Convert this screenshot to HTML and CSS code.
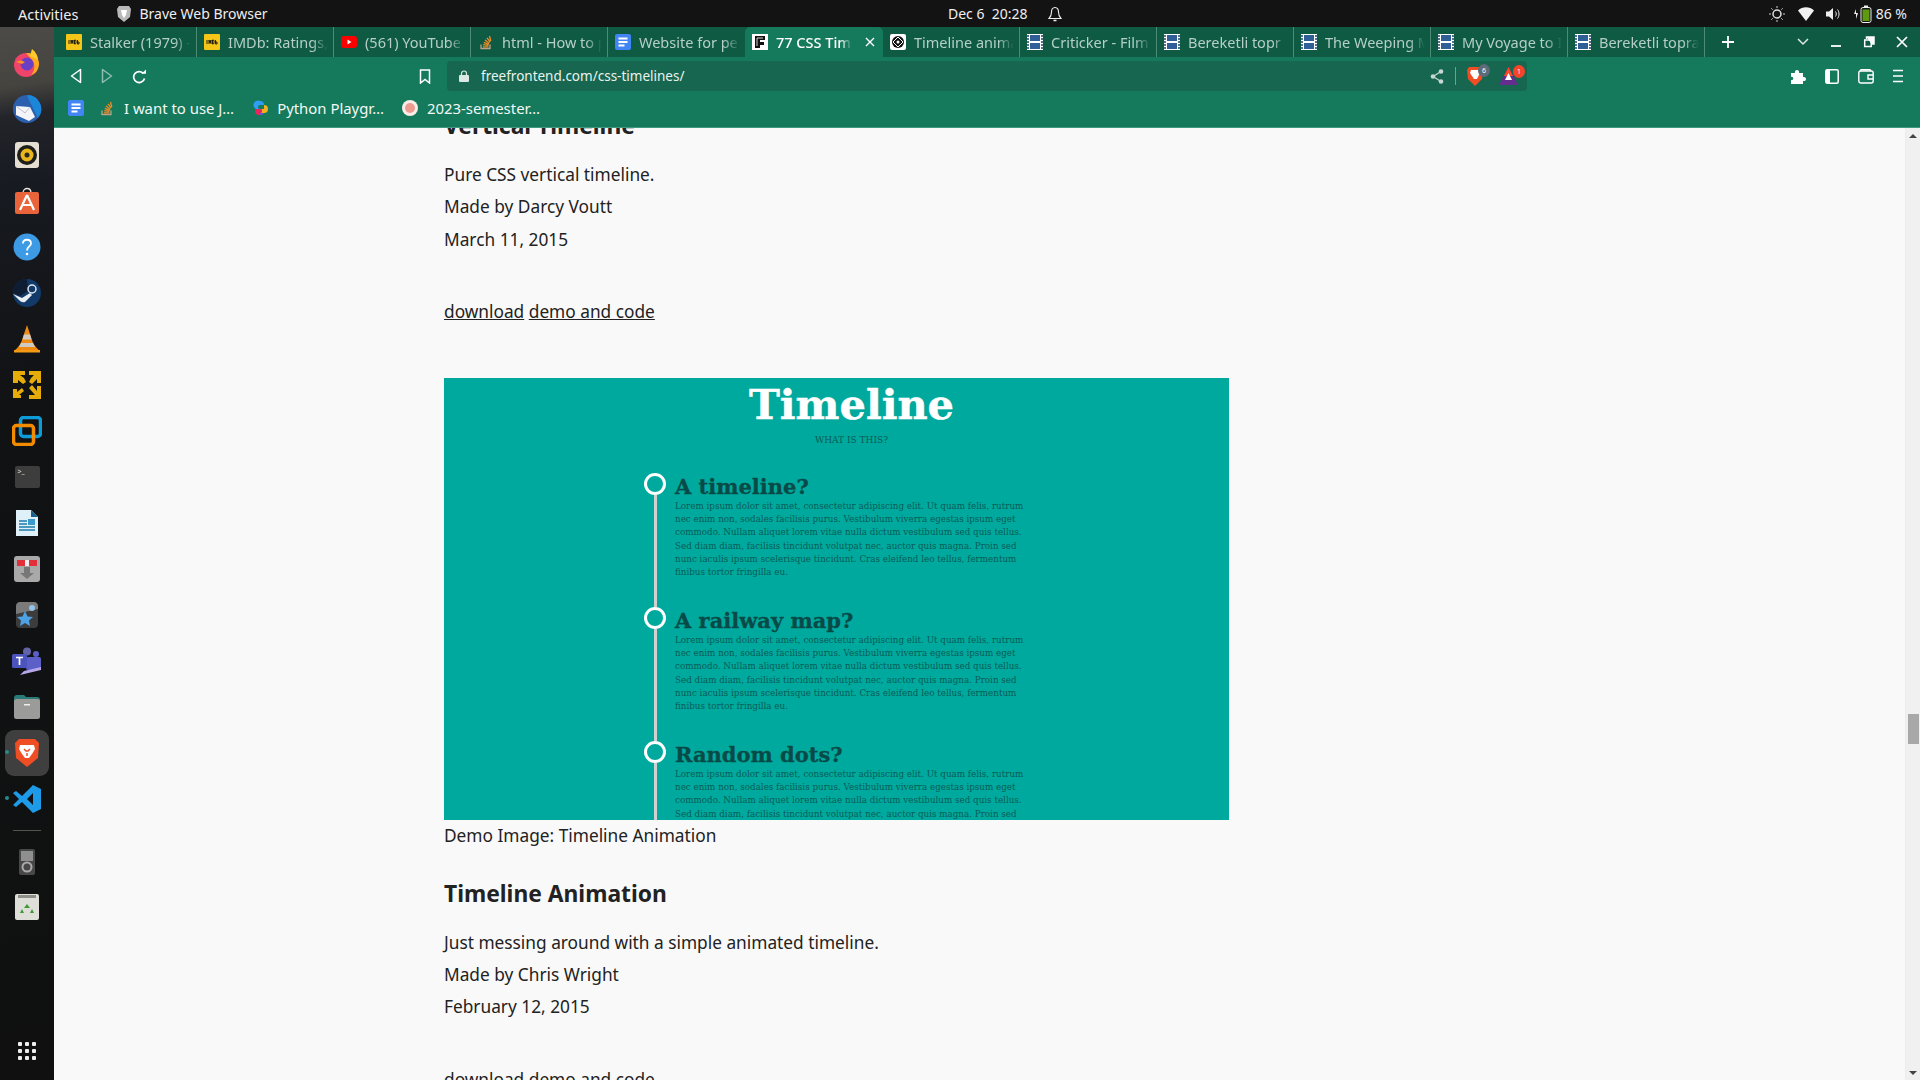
FILE: index.html
```html
<!DOCTYPE html>
<html>
<head>
  <title>77 CSS Timelines</title>
  <link rel="stylesheet" href="styles.css">
</head>
<body>
  <svg class="defs" width="0" height="0">
    <symbol id="fav-doc" viewBox="0 0 16 16"><rect width="16" height="16" rx="2" fill="#4285f4"/><path d="M3.500 4.500h9M3.500 8h9M3.500 11.500h6" stroke="#fff" stroke-width="1.800"/></symbol>
    <symbol id="fav-film" viewBox="0 0 16 16"><rect width="16" height="16" fill="#fff"/><rect x="3" y="1" width="10" height="6" fill="#2f5f96"/><rect x="3" y="9" width="10" height="6" fill="#2f5f96"/><path d="M1 1v14M15 1v14" stroke="#54708f" stroke-width="2" stroke-dasharray="2 1"/></symbol>
    <symbol id="fav-imdb" viewBox="0 0 16 16"><rect width="16" height="16" rx="1" fill="#f5c518"/><path d="M3 6v4M5 10V6l1 3 1-3v4M8.500 6v4h1l.5-1V7l-.5-1zM11.500 6v4h1.500V8h-1.500" stroke="#111" stroke-width=".9" fill="none"/></symbol>
    <symbol id="fav-so" viewBox="0 0 16 16"><path d="M3 10.500v4h9v-4" stroke="#b8a28a" stroke-width="1.300" fill="none"/><path d="M5 12.800h5.500M5.200 10.600l5.300.8M5.800 8.300l5 2M7 6l4.300 3.200M9 3.800l3.200 4.200M11.500 2l1.300 5" stroke="#f08a24" stroke-width="1.300"/></symbol>
  </svg>

  <header class="topbar">
    <div class="topbar-left">
      <span class="activities">Activities</span>
      <svg class="app-shield" width="16" height="18" viewBox="0 0 16 18"><path d="M3 1h10l2 3-1 8-6 5-6-5-1-8z" fill="#b9b9b9"/><path d="M5 5h6l-1 5-2 3-2-3z" fill="#fff"/></svg>
      <span>Brave Web Browser</span>
    </div>
    <div class="topbar-clock">
      <span>Dec 6&nbsp; 20:28</span>
      <svg width="14" height="16" viewBox="0 0 14 16"><path d="M7 1.500c-2.500 0-3.500 2-3.500 4.500 0 3-1 5-2.500 6.500h12C11.500 11 10.500 9 10.500 6c0-2.500-1-4.500-3.500-4.500z" fill="none" stroke="#eee" stroke-width="1.100"/><path d="M5.500 14.500h3" stroke="#eee" stroke-width="1.500"/></svg>
    </div>
    <div class="topbar-right">
      <svg width="18" height="18" viewBox="0 0 18 18"><circle cx="9" cy="9" r="4" fill="none" stroke="#ddd" stroke-width="1.500"/><path d="M9 1v2M9 15v2M1 9h2M15 9h2M3.300 3.300l1.400 1.400M13.300 13.300l1.400 1.400M3.300 14.700l1.400-1.400M13.300 4.700l1.400-1.400" stroke="#ccc"/></svg>
      <svg width="16" height="14" viewBox="0 0 16 14"><path d="M0 3.500C4.500-.8 11.500-.8 16 3.500L8 14z" fill="#f2f2f2"/></svg>
      <svg width="15" height="14" viewBox="0 0 15 14"><path d="M0 4.500h3L7 1v12L3 9.500H0z" fill="#eee"/><path d="M9.500 4.500c1 1.500 1 3.500 0 5M11.500 2.500c2 2.500 2 6.500 0 9" stroke="#eee" fill="none"/></svg>
      <span class="battery">
        <svg width="20" height="18" viewBox="0 0 20 18"><path d="M3 4 1 9h2v5l2-6H3z" fill="#eee"/><rect x="8" y="2.500" width="10" height="15" rx="2" fill="none" stroke="#eee"/><rect x="11" y=".5" width="4" height="2" fill="#eee"/><rect x="9.500" y="4.500" width="7" height="11.500" fill="#5d9a10"/></svg>
        86 %
      </span>
    </div>
  </header>

  <div class="desktop">
    <nav class="dock">
      <div class="dock-item"><svg width="30" height="30" viewBox="0 0 30 30"><circle cx="14" cy="17" r="12" fill="#f0446a"/><path d="M14 5c8-1 14 6 13 12-1 6-4 9-8 10 4-4 5-12 0-16z" fill="#ffa81f"/><path d="M20 1c4 3 6 7 6 11l-8-4z" fill="#ffcb2c"/><circle cx="15" cy="16" r="6.500" fill="#6a3fc4"/><path d="M4 14c3-2 6-2 9 0l-3 2z" fill="#ff9220"/></svg></div>
      <div class="dock-item"><svg width="30" height="30" viewBox="0 0 30 30"><circle cx="15" cy="15" r="14" fill="#2c5fae"/><path d="M15 1a14 14 0 0 1 11 23L17 6z" fill="#1c86d8"/><path d="M4 12l14 1 5 10-6 4-13-6z" fill="#f5f5f8"/><path d="M4 12l9 7 5-6" stroke="#bcc2d4" fill="none"/></svg></div>
      <div class="dock-item"><svg width="26" height="30" viewBox="0 0 26 30"><rect x="1" y="2" width="24" height="26" rx="3" fill="#e4dfd2"/><circle cx="13" cy="15" r="10" fill="#1d1d1b"/><circle cx="13" cy="15" r="6.500" fill="#e9b71b"/><circle cx="13" cy="15" r="2.500" fill="#2a2a24"/></svg></div>
      <div class="dock-item"><svg width="28" height="30" viewBox="0 0 28 30"><path d="M10 7c0-6 8-6 8 0" fill="none" stroke="#eee3da" stroke-width="1.300"/><rect x="2" y="6" width="24" height="22" rx="2" fill="#e9643a"/><path d="M14 9l7 15M14 9 7 24M9.500 19h9" stroke="#fff" stroke-width="2.200" fill="none"/></svg></div>
      <div class="dock-item"><svg width="28" height="28" viewBox="0 0 28 28"><circle cx="14" cy="14" r="13.500" fill="#3c9be4"/><path d="M10 10.500c0-5 8-5 8 0 0 3-4 3-4 7" stroke="#fff" stroke-width="1.800" fill="none"/><circle cx="14" cy="21" r="1.300" fill="#fff"/></svg></div>
      <div class="dock-item"><svg width="28" height="28" viewBox="0 0 28 28"><circle cx="14" cy="14" r="14" fill="#123a68"/><path d="M14 0a14 14 0 0 0-14 14l7 3 8-5z" fill="#0e1d33"/><circle cx="19" cy="10" r="4" fill="none" stroke="#dfe6ee" stroke-width="1.500"/><path d="M0 15l9 4 8-5 2 2-7 7c-3 1-5-1-6-2z" fill="#e9eef3"/></svg></div>
      <div class="dock-item"><svg width="26" height="30" viewBox="0 0 26 30"><path d="M13 1l5 15c1 3 3 7 8 11H0c5-4 7-8 8-11z" fill="#ef8a12"/><path d="M10 10.500h6l1.500 5H8.500zM7 19h12l2 4H5z" fill="#cfcac4"/><rect y="26" width="26" height="2.500" fill="#f59a14"/></svg></div>
      <div class="dock-item"><svg width="30" height="30" viewBox="0 0 30 30"><path d="M1 1h12v4H8l4 3 2 4-3 2-5-4v3H1zM29 1H17v4h5l-3 3-2 4 3 2 5-5v4h4zM1 26l0-7h4v3l5-4 2 3-5 4h2v3H1zM29 29H17v-4h6l-6-7 3-3 5 6v-5h4z" fill="#e6ac0a"/></svg></div>
      <div class="dock-item"><svg width="30" height="30" viewBox="0 0 30 30"><rect x="8.500" y="1.500" width="20" height="19" rx="3" fill="none" stroke="#0d9cd8" stroke-width="3.500"/><rect x="1.500" y="9.500" width="20" height="19" rx="3" fill="none" stroke="#f28b00" stroke-width="3.500"/></svg></div>
      <div class="dock-item"><div class="dock-term">&gt;_</div></div>
      <div class="dock-item"><svg width="24" height="28" viewBox="0 0 24 28"><path d="M1 1h15l7 7v19H1z" fill="#dff0f8"/><path d="M16 1l7 7h-7z" fill="#18618c"/><path d="M4 12h8M4 15h8M4 18h16M4 21h16" stroke="#1d7bab" stroke-width="1.500"/><rect x="13" y="10" width="7" height="6" fill="#3b9acb"/></svg></div>
      <div class="dock-item"><svg width="26" height="26" viewBox="0 0 26 26"><rect width="26" height="26" rx="3" fill="#a9a9a9"/><rect x="3" y="4" width="20" height="6" fill="#e2303a"/><rect x="11" y="4" width="4" height="6" fill="#eee"/><path d="M10 11h6v6h4l-7 6-7-6h4z" fill="#777"/></svg></div>
      <div class="dock-item"><svg width="22" height="26" viewBox="0 0 22 26"><rect width="22" height="26" rx="4" fill="#3c3c3c"/><path d="M0 4c0-2 2-4 4-4h14c2 0 4 2 4 4v3L0 12z" fill="#7a7a7a"/><path d="M9 9l2.500 5.500 5.500.5-4 3.500 1 5.500-5-3-5 3 1-5.500-4-3.500 5.500-.5z" fill="#4da2e6"/><circle cx="16" cy="6" r="3" fill="#93c3e8"/></svg></div>
      <div class="dock-item"><svg width="30" height="28" viewBox="0 0 30 28"><circle cx="15" cy="4.500" r="4" fill="#6264a7"/><circle cx="24" cy="7" r="3" fill="#5b5fc7"/><rect x="14" y="10" width="15" height="13" rx="2" fill="#5b5fc7"/><rect y="7" width="15" height="14" rx="1.500" fill="#4b53bc"/><path d="M4 10.500h7M7.500 10.500V18" stroke="#fff" stroke-width="1.700"/><path d="M8 28l21-5v-3L12 24z" fill="#b7a6ea"/></svg></div>
      <div class="dock-item"><svg width="28" height="24" viewBox="0 0 28 24"><path d="M1 3c0-2 1-3 3-3h7l2 2h11c2 0 3 1 3 3v4H1z" fill="#2a7a78"/><rect x="1" y="4" width="26" height="20" rx="2.500" fill="#9b9b99"/><rect x="11" y="9" width="6" height="1.500" fill="#eee"/></svg></div>
      <div class="dock-item is-active"><span class="dock-dot"></span><svg width="26" height="30" viewBox="0 0 26 30"><path d="M5 1h16l4 4-1 15-11 9L2 20 1 5z" fill="#ef4d23"/><path d="M6 7h14l1 4-3 5-3 4h-4l-3-4-3-5z" fill="#fff"/><path d="M10 11l2 2h2l2-2M13 15v3" stroke="#ef4d23" stroke-width="1.500" fill="none"/></svg></div>
      <div class="dock-item"><span class="dock-dot"></span><svg width="28" height="28" viewBox="0 0 28 28"><path d="M20 0l8 4v20l-8 4-11-11-6 5-3-2 6-6-6-6 3-2 6 5zm0 8-6 6 6 6z" fill="#1e9be8"/></svg></div>
      <div class="dock-rule"></div>
      <div class="dock-item is-low"><svg width="16" height="26" viewBox="0 0 16 26"><rect width="16" height="26" rx="2" fill="#474747"/><rect x="2" y="2" width="12" height="10" fill="#8f8f8f"/><circle cx="8" cy="18" r="4.500" fill="none" stroke="#aaa" stroke-width="2"/></svg></div>
      <div class="dock-item is-low"><svg width="24" height="26" viewBox="0 0 24 26"><rect width="24" height="26" rx="2" fill="#dedfd8"/><rect x="3" y="1" width="18" height="3" fill="#8f8f88"/><path d="M12 10l3 4h-6zM7 15l2 4H5zM17 15l2 4h-4z" fill="#3f9a35"/></svg></div>
      <div class="dock-apps">
        <i></i><i></i><i></i><i></i><i></i><i></i><i></i><i></i><i></i>
      </div>
    </nav>

    <div class="browser">
      <div class="tabstrip">
        <div class="tab is-first"><svg class="fav"><use href="#fav-imdb"/></svg><span class="tab-title">Stalker (1979) -</span></div>
        <div class="tab"><svg class="fav"><use href="#fav-imdb"/></svg><span class="tab-title">IMDb: Ratings,</span></div>
        <div class="tab"><svg class="fav" viewBox="0 0 16 16"><rect y="2" width="16" height="12" rx="3" fill="#f00"/><path d="M6.500 5.500v5l4-2.500z" fill="#fff"/></svg><span class="tab-title">(561) YouTube</span></div>
        <div class="tab"><svg class="fav"><use href="#fav-so"/></svg><span class="tab-title">html - How to p</span></div>
        <div class="tab is-before-active"><svg class="fav"><use href="#fav-doc"/></svg><span class="tab-title">Website for pe</span></div>
        <div class="tab is-active"><svg class="fav" viewBox="0 0 16 16"><rect width="16" height="16" fill="#fff"/><path d="M3 2h10v4H8v2h4v3H8v3H3z" fill="#111"/><path d="M5 4h6M5 4v8" stroke="#fff" stroke-width=".8"/></svg><span class="tab-title">77 CSS Time</span><svg class="tab-close" width="10" height="10" viewBox="0 0 10 10"><path d="M1 1l8 8M9 1 1 9" stroke="#fff" stroke-width="1.400"/></svg></div>
        <div class="tab"><svg class="fav" viewBox="0 0 16 16"><rect width="16" height="16" rx="2" fill="#fff"/><circle cx="8" cy="8" r="6" fill="#111"/><path d="M8 3l5 5-5 5-5-5z" fill="none" stroke="#fff"/><circle cx="8" cy="8" r="1.500" fill="#fff"/></svg><span class="tab-title">Timeline anima</span></div>
        <div class="tab"><svg class="fav"><use href="#fav-film"/></svg><span class="tab-title">Criticker - Film</span></div>
        <div class="tab"><svg class="fav"><use href="#fav-film"/></svg><span class="tab-title">Bereketli topr</span></div>
        <div class="tab"><svg class="fav"><use href="#fav-film"/></svg><span class="tab-title">The Weeping M</span></div>
        <div class="tab"><svg class="fav"><use href="#fav-film"/></svg><span class="tab-title">My Voyage to It</span></div>
        <div class="tab"><svg class="fav"><use href="#fav-film"/></svg><span class="tab-title">Bereketli topra</span></div>
        <svg class="new-tab" width="14" height="14" viewBox="0 0 14 14"><path d="M7 1v12M1 7h12" stroke="#fff" stroke-width="1.800"/></svg>
        <div class="win-controls">
          <svg width="12" height="8" viewBox="0 0 12 8"><path d="M1 1l5 5 5-5" stroke="#dfeae6" stroke-width="1.500" fill="none"/></svg>
          <svg width="12" height="12" viewBox="0 0 12 12"><path d="M1 10h10" stroke="#fff" stroke-width="1.800"/></svg>
          <svg width="12" height="12" viewBox="0 0 12 12"><path d="M3.500 1h7.500v7H8.500" fill="#fff"/><path d="M3.500 3V1h7.500v7H9" fill="none" stroke="#fff" stroke-width="1.500"/><rect x="1.700" y="4" width="6.500" height="6.500" fill="none" stroke="#fff" stroke-width="1.500"/></svg>
          <svg width="12" height="12" viewBox="0 0 12 12"><path d="M1 1l10 10M11 1 1 11" stroke="#fff" stroke-width="1.700"/></svg>
        </div>
      </div>

      <div class="toolbar">
        <div class="nav-btns">
          <svg width="12" height="16" viewBox="0 0 12 16"><path d="M10.500 1.500v13L1.500 8z" fill="none" stroke="#fff" stroke-width="1.500" stroke-linejoin="round"/></svg>
          <svg class="is-off" width="12" height="16" viewBox="0 0 12 16"><path d="M1.500 1.500v13l9-6.500z" fill="none" stroke="#8fbcae" stroke-width="1.500" stroke-linejoin="round"/></svg>
          <svg width="15" height="15" viewBox="0 0 15 15"><path d="M12.500 9.500a5.500 5.500 0 1 1-1.300-5.200" fill="none" stroke="#fff" stroke-width="1.700"/><path d="M9.500 4.800h4.500V.5z" fill="#fff"/></svg>
          <svg class="nav-bookmark" width="12" height="15" viewBox="0 0 12 15"><path d="M1.500 1h9v13L6 10.500 1.500 14z" fill="none" stroke="#fff" stroke-width="1.500"/></svg>
        </div>
        <div class="urlbar">
          <svg width="10" height="12" viewBox="0 0 10 12"><rect y="5" width="10" height="7" rx="1" fill="#dce8e4"/><path d="M2.500 5V3.500a2.500 2.500 0 0 1 5 0V5" fill="none" stroke="#dce8e4" stroke-width="1.200"/></svg>
          <span class="url-text">freefrontend.com/css-timelines/</span>
          <svg class="url-share" width="14" height="15" viewBox="0 0 14 15"><path d="M11 2.500 3 7.500l8 5" fill="none" stroke="#c7d8d2" stroke-width="1.200"/><circle cx="11" cy="2.500" r="2.300" fill="#c7d8d2"/><circle cx="3" cy="7.500" r="2.300" fill="#c7d8d2"/><circle cx="11" cy="12.500" r="2.300" fill="#c7d8d2"/></svg>
          <span class="url-divider"></span>
          <span class="shield">
            <svg width="16" height="20" viewBox="0 0 16 20"><path d="M2 1h12l2 3-1 9-7 7-7-7-1-9z" fill="#ef4d23"/><path d="M4 4h8l1 3-3 6H7L3 7z" fill="#fff"/></svg>
            <span class="badge badge-grey">6</span>
          </span>
          <span class="shield bat">
            <svg width="19" height="18" viewBox="0 0 19 18"><path d="M9.500 0 19 18H0z" fill="#662d91"/><path d="M9.500 0 14 9H5z" fill="#ff4724"/><path d="M9.500 6l3.500 7H6z" fill="#fff"/></svg>
            <span class="badge badge-red">1</span>
          </span>
        </div>
        <div class="tool-btns">
          <svg width="15" height="15" viewBox="0 0 15 15"><path d="M0 4h4c-1-4 5-4 4 0h4v4c4-1 4 5 0 4v3H0v-4c3 1 3-4 0-3z" fill="#fff"/></svg>
          <svg width="14" height="15" viewBox="0 0 14 15"><rect x=".8" y=".8" width="12.400" height="13.400" rx="1.500" fill="none" stroke="#fff" stroke-width="1.500"/><rect x="1" y="1" width="4" height="13" fill="#fff"/></svg>
          <svg width="16" height="15" viewBox="0 0 16 15"><rect x=".8" y="2" width="14.400" height="12" rx="2" fill="none" stroke="#fff" stroke-width="1.400"/><path d="M2 2 3 .8h9l1 1.200M15 6h-5v4h5" fill="none" stroke="#fff" stroke-width="1.400"/></svg>
          <svg width="10" height="14" viewBox="0 0 10 14"><path d="M0 1.500h10M0 7h10M0 12.500h10" stroke="#fff" stroke-width="1.500"/></svg>
        </div>
      </div>

      <div class="bookmarks">
        <svg class="fav bm-doc"><use href="#fav-doc"/></svg>
        <div class="bm bm-first"><svg class="fav"><use href="#fav-so"/></svg><span>I want to use J…</span></div>
        <div class="bm"><svg class="fav" viewBox="0 0 16 16"><path d="M8 1a4 4 0 0 1 4 4H8a2 2 0 0 0 0 4H4a4 4 0 0 1 4-8z" fill="#2f9df4"/><path d="M12 5a4 4 0 0 1 0 8H8a2 2 0 0 0 0-4h4z" fill="#f2b01e"/><path d="M8 9a2 2 0 0 1 0 4v2a4 4 0 0 1-5-4c0-1 .5-2 1-2z" fill="#e8265e"/><path d="M8 13h4a4 4 0 0 1-4 2z" fill="#7c4dd0"/></svg><span>Python Playgr…</span></div>
        <div class="bm"><svg class="fav" viewBox="0 0 16 16"><circle cx="8" cy="8" r="8" fill="#fbeee9"/><circle cx="8" cy="8" r="5" fill="#ee9b92"/></svg><span>2023-semester…</span></div>
      </div>

      <div class="viewport">
        <main class="page">
          <article class="entry entry-first">
            <h2>Vertical Timeline</h2>
            <p>Pure CSS vertical timeline.</p>
            <p>Made by Darcy Voutt</p>
            <p>March 11, 2015</p>
            <p class="links"><a href="#">download</a> <a href="#">demo and code</a></p>
          </article>

          <figure class="demo">
            <div class="demo-image">
              <h1 class="demo-title">Timeline</h1>
              <div class="demo-sub">WHAT IS THIS?</div>
              <div class="demo-item">
                <div class="demo-rail"><span class="demo-dot"></span><span class="demo-line"></span></div>
                <div class="demo-copy">
                  <h3>A timeline?</h3>
                  <p>Lorem ipsum dolor sit amet, consectetur adipiscing elit. Ut quam felis, rutrum<br>nec enim non, sodales facilisis purus. Vestibulum viverra egestas ipsum eget<br>commodo. Nullam aliquet lorem vitae nulla dictum vestibulum sed quis tellus.<br>Sed diam diam, facilisis tincidunt volutpat nec, auctor quis magna. Proin sed<br>nunc iaculis ipsum scelerisque tincidunt. Cras eleifend leo tellus, fermentum<br>finibus tortor fringilla eu.</p>
                </div>
              </div>
              <div class="demo-item">
                <div class="demo-rail"><span class="demo-dot"></span><span class="demo-line"></span></div>
                <div class="demo-copy">
                  <h3>A railway map?</h3>
                  <p>Lorem ipsum dolor sit amet, consectetur adipiscing elit. Ut quam felis, rutrum<br>nec enim non, sodales facilisis purus. Vestibulum viverra egestas ipsum eget<br>commodo. Nullam aliquet lorem vitae nulla dictum vestibulum sed quis tellus.<br>Sed diam diam, facilisis tincidunt volutpat nec, auctor quis magna. Proin sed<br>nunc iaculis ipsum scelerisque tincidunt. Cras eleifend leo tellus, fermentum<br>finibus tortor fringilla eu.</p>
                </div>
              </div>
              <div class="demo-item">
                <div class="demo-rail"><span class="demo-dot"></span><span class="demo-line"></span></div>
                <div class="demo-copy">
                  <h3>Random dots?</h3>
                  <p>Lorem ipsum dolor sit amet, consectetur adipiscing elit. Ut quam felis, rutrum<br>nec enim non, sodales facilisis purus. Vestibulum viverra egestas ipsum eget<br>commodo. Nullam aliquet lorem vitae nulla dictum vestibulum sed quis tellus.<br>Sed diam diam, facilisis tincidunt volutpat nec, auctor quis magna. Proin sed</p>
                </div>
              </div>
            </div>
            <figcaption>Demo Image: Timeline Animation</figcaption>
          </figure>

          <article class="entry">
            <h2>Timeline Animation</h2>
            <p>Just messing around with a simple animated timeline.</p>
            <p>Made by Chris Wright</p>
            <p>February 12, 2015</p>
            <p class="links"><a href="#">download</a> <a href="#">demo and code</a></p>
          </article>
        </main>
        <div class="scrollbar">
          <span class="arrow-up"></span>
          <span class="thumb"></span>
          <span class="arrow-down"></span>
        </div>
      </div>
    </div>
  </div>
</body>
</html>
```

FILE: styles.css
```css
/* desktop shell */
* {
  box-sizing: border-box;
}
html, body {
  margin: 0;
  height: 100%;
  overflow: hidden;
}
body {
  display: flex;
  flex-direction: column;
  width: 1920px;
  height: 1080px;
  font-family: "Noto Sans", sans-serif;
  background: #111;
}
.defs {
  display: none;
}

/* top bar */
.topbar {
  flex: none;
  display: flex;
  align-items: center;
  height: 27px;
  background: #131313;
  color: #eee;
  font-size: 14px;
  padding: 0 13px 0 18px;
}
.activities {
  font-size: 14.500px;
}
.topbar-left {
  flex: none;
  width: 930px;
  display: flex;
  align-items: center;
}
.app-shield {
  margin: 0 7px 0 38px;
}
.topbar-clock {
  display: flex;
  align-items: center;
  gap: 20px;
}
.topbar-right {
  margin-left: auto;
  display: flex;
  align-items: center;
  justify-content: flex-end;
  gap: 12px;
}
.battery {
  display: flex;
  align-items: center;
  gap: 3px;
}

/* dock */
.desktop {
  flex: 1;
  display: flex;
  min-height: 0;
}
.dock {
  flex: none;
  width: 54px;
  display: flex;
  flex-direction: column;
  align-items: center;
  padding-top: 13px;
  background: linear-gradient(172deg, #4d4b48 0, #46443f 60px, #22242a 90px, #171a20 160px, #111214 380px, #0f100f 100%);
}
.dock-item {
  position: relative;
  flex: none;
  width: 44px;
  height: 46px;
  display: flex;
  align-items: center;
  justify-content: center;
}
.dock-item.is-active {
  background: #3f3f3f;
  border-radius: 9px;
}
.dock-item.is-low {
  height: 45px;
}
.dock-dot {
  position: absolute;
  left: 0;
  top: 20px;
  width: 4px;
  height: 4px;
  border-radius: 50%;
  background: #2a8a8a;
}
.dock-term {
  width: 25px;
  height: 22px;
  background: #3d3d3d;
  border-radius: 2px;
  color: #ddd;
  font-size: 7px;
  line-height: 12px;
  padding-left: 3px;
}
.dock-rule {
  flex: none;
  width: 28px;
  height: 1px;
  margin: 8px 0 8px;
  background: #55534f;
}
.dock-apps {
  margin-top: auto;
  margin-bottom: 20px;
  display: grid;
  grid-template-columns: repeat(3, 4px);
  gap: 3px;
}
.dock-apps i {
  width: 4px;
  height: 4px;
  background: #eee;
  border-radius: 1px;
}

/* browser chrome */
.browser {
  flex: 1;
  min-width: 0;
  display: flex;
  flex-direction: column;
}
.tabstrip {
  flex: none;
  height: 30px;
  display: flex;
  align-items: stretch;
  background: #0e5a43;
  color: #b5cfc6;
  font-size: 14.500px;
}
.tab {
  flex: none;
  width: 137px;
  display: flex;
  align-items: center;
  gap: 8px;
  padding-left: 7px;
  border-right: 1px solid #4f8a77;
  padding-bottom: 1px;
}
.tab.is-first {
  width: 143px;
  padding-left: 12px;
}
.tab.is-before-active {
  border-right: none;
}
.tab.is-active {
  width: 138px;
  background: #157a5c;
  color: #fff;
  font-weight: 500;
  border-right: none;
  border-radius: 5px 5px 0 0;
}
.fav {
  flex: none;
  width: 16px;
  height: 16px;
}
.tab-title {
  flex: 1;
  min-width: 0;
  overflow: hidden;
  white-space: nowrap;
  margin-right: 5px;
  -webkit-mask-image: linear-gradient(to right, #000 84%, transparent);
  mask-image: linear-gradient(to right, #000 84%, transparent);
}
.tab-close {
  flex: none;
  margin: 0 8px 0 0;
}
.new-tab {
  align-self: center;
  margin-left: 16px;
}
.win-controls {
  margin-left: auto;
  display: flex;
  align-items: center;
  gap: 21px;
  padding-right: 12px;
}

.toolbar {
  flex: none;
  height: 37px;
  display: flex;
  align-items: flex-start;
  padding-top: 4px;
  background: #157a5c;
}
.nav-btns {
  flex: none;
  width: 393px;
  height: 30px;
  display: flex;
  align-items: center;
  padding-left: 16px;
  gap: 19px;
}
.nav-btns .nav-bookmark {
  margin-left: auto;
  margin-right: 16px;
}
.urlbar {
  flex: none;
  width: 1080px;
  height: 30px;
  display: flex;
  align-items: center;
  padding-left: 12px;
  background: #17664f;
  border-radius: 4px;
  color: #eaf2ef;
  font-size: 13.500px;
}
.url-text {
  margin-left: 12px;
}
.url-share {
  margin-left: auto;
}
.url-divider {
  width: 1px;
  height: 18px;
  margin: 0 11px;
  background: #6f9f90;
}
.shield {
  position: relative;
  display: flex;
  margin-right: 16px;
}
.shield.bat {
  margin-right: 9px;
}
.badge {
  position: absolute;
  right: -7px;
  top: -2px;
  width: 12px;
  height: 13px;
  border-radius: 50%;
  font-size: 7px;
  line-height: 13px;
  text-align: center;
  color: #fff;
}
.badge-grey {
  background: #5c6b78;
}
.badge-red {
  background: #f4452b;
}
.tool-btns {
  flex: 1;
  height: 30px;
  display: flex;
  align-items: center;
  justify-content: flex-end;
  gap: 19px;
  padding-right: 17px;
}
.bookmarks {
  flex: none;
  height: 34px;
  display: flex;
  align-items: center;
  padding: 0 0 5px 14px;
  background: #157a5c;
  border-bottom: 1px solid #3f9a80;
  color: #f2f7f5;
  font-size: 14.900px;
}
.bm {
  display: flex;
  align-items: center;
  gap: 9px;
  white-space: nowrap;
}
.bm-first {
  margin-left: 15px;
}
.bm + .bm {
  margin-left: 18px;
}

/* page */
.viewport {
  flex: 1;
  min-height: 0;
  display: flex;
  background: #f9f9f9;
  overflow: hidden;
}
.page {
  flex: 1;
  min-width: 0;
  padding-left: 390px;
  color: #222;
  font-size: 17.300px;
}
.entry h2 {
  margin: 0 0 17px;
  font-size: 22.800px;
  line-height: 32px;
  font-weight: 700;
}
.entry p {
  margin: 0;
  line-height: 32.400px;
}
.entry-first {
  margin-top: -18px;
}
.entry p.links {
  margin-top: 40px;
}
.entry a {
  color: #222;
}
.demo {
  margin: 49px 0 0;
}
.demo figcaption {
  height: 32px;
  line-height: 32px;
}
.demo + .entry {
  margin-top: 26px;
}

/* the demo picture */
.demo-image {
  width: 785px;
  height: 442px;
  overflow: hidden;
  background: #00a99d;
  font-family: "DejaVu Serif", serif;
  color: #0a5c57;
}
.demo-title {
  margin: 0;
  padding: 2px 0 0 30px;
  text-align: center;
  color: #fff;
  font-size: 41.500px;
  line-height: 50px;
  font-weight: 700;
  -webkit-text-stroke: .5px #fff;
}
.demo-sub {
  margin: 4px 0 27px;
  padding-left: 30px;
  text-align: center;
  font-size: 9px;
  line-height: 12px;
  color: #0a5a56;
}
.demo-item {
  display: flex;
  height: 134px;
  padding-left: 200px;
}
.demo-rail {
  flex: none;
  width: 31px;
  display: flex;
  flex-direction: column;
  align-items: center;
  padding-right: 9px;
}
.demo-dot {
  flex: none;
  width: 22px;
  height: 22px;
  border: 3px solid #fff;
  border-radius: 50%;
}
.demo-line {
  flex: 1;
  width: 3px;
  background: #d0d0d0;
}
.demo-copy h3 {
  margin: 0;
  font-size: 21px;
  line-height: 27px;
  color: #084a47;
  font-weight: 700;
  -webkit-text-stroke: .3px #084a47;
}
.demo-copy p {
  margin: 0;
  font-size: 8.750px;
  line-height: 13.350px;
  white-space: nowrap;
}

/* scrollbar */
.scrollbar {
  flex: none;
  width: 15px;
  display: flex;
  flex-direction: column;
  align-items: center;
  background: #f0f0f0;
  border-left: 1px solid #ececec;
}
.thumb {
  width: 11px;
  height: 30px;
  margin-top: 576px;
  background: #a8a8a8;
}
.arrow-up, .arrow-down {
  width: 0;
  height: 0;
  border-left: 4px solid transparent;
  border-right: 4px solid transparent;
}
.arrow-up {
  margin-top: 6px;
  border-bottom: 4px solid #444;
}
.arrow-down {
  margin-top: auto;
  margin-bottom: 5px;
  border-top: 4px solid #444;
}
```
